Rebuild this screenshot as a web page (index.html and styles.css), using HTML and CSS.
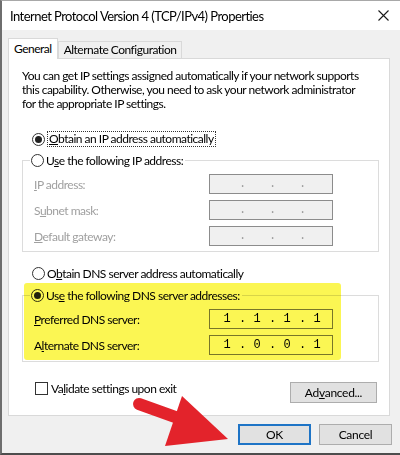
FILE: index.html
```html
<!DOCTYPE html>
<html lang="en">
<head>
  <meta charset="UTF-8">
  <title>Internet Protocol Version 4 (TCP/IPv4) Properties</title>
  <link rel="stylesheet" href="styles.css">
</head>
<body>

  <div class="window">
    <div class="titlebar">
      <span class="title">Internet Protocol Version 4 (TCP/IPv4) Properties</span>
      <svg class="close" width="11" height="11" viewBox="0 0 11 11">
        <path d="M0.5 0.5 L10.5 10.5 M10.5 0.5 L0.5 10.5" stroke="#1a1a1a" stroke-width="1.1" fill="none"/>
      </svg>
    </div>

    <div class="body">
      <div class="tabs">
        <div class="tab active">General</div>
        <div class="tab">Alternate Configuration</div>
      </div>

      <div class="panel">
        <p class="intro">You can get IP settings assigned automatically if your network supports<br>this capability. Otherwise, you need to ask your network administrator<br>for the appropriate IP settings.</p>

        <div class="radio-row first">
          <span class="radio checked"></span>
          <span class="focus"><u>O</u>btain an IP address automatically</span>
        </div>

        <fieldset class="group disabled">
          <legend><span class="radio"></span><span>U<u>s</u>e the following IP address:</span></legend>
          <div class="field-row">
            <span class="label"><u>I</u>P address:</span>
            <span class="ipbox"><span class="oct"></span><span class="dot">.</span><span class="oct"></span><span class="dot">.</span><span class="oct"></span><span class="dot">.</span><span class="oct"></span></span>
          </div>
          <div class="field-row">
            <span class="label">S<u>u</u>bnet mask:</span>
            <span class="ipbox"><span class="oct"></span><span class="dot">.</span><span class="oct"></span><span class="dot">.</span><span class="oct"></span><span class="dot">.</span><span class="oct"></span></span>
          </div>
          <div class="field-row">
            <span class="label"><u>D</u>efault gateway:</span>
            <span class="ipbox"><span class="oct"></span><span class="dot">.</span><span class="oct"></span><span class="dot">.</span><span class="oct"></span><span class="dot">.</span><span class="oct"></span></span>
          </div>
        </fieldset>

        <div class="radio-row dns-auto">
          <span class="radio"></span>
          <span>O<u>b</u>tain DNS server address automatically</span>
        </div>

        <fieldset class="group dns">
          <legend><span class="radio checked"></span><span>Us<u>e</u> the following DNS server addresses:</span></legend>
          <div class="field-row">
            <span class="label"><u>P</u>referred DNS server:</span>
            <span class="ipbox"><span class="oct">1</span><span class="dot">.</span><span class="oct">1</span><span class="dot">.</span><span class="oct">1</span><span class="dot">.</span><span class="oct">1</span></span>
          </div>
          <div class="field-row">
            <span class="label">A<u>l</u>ternate DNS server:</span>
            <span class="ipbox"><span class="oct">1</span><span class="dot">.</span><span class="oct">0</span><span class="dot">.</span><span class="oct">0</span><span class="dot">.</span><span class="oct">1</span></span>
          </div>
        </fieldset>

        <div class="bottom-row">
          <div class="check-row">
            <span class="checkbox"></span>
            <span>Va<u>l</u>idate settings upon exit</span>
          </div>
          <button class="btn advanced">Ad<u>v</u>anced...</button>
        </div>
      </div>

      <div class="footer">
        <button class="btn default">OK</button>
        <button class="btn">Cancel</button>
      </div>
    </div>

    <div class="highlight"></div>

    <svg class="arrow" width="400" height="455" viewBox="0 0 400 455">
      <line x1="139" y1="404" x2="178" y2="418" stroke="#e3232b" stroke-width="12" stroke-linecap="round"/>
      <polygon points="182,396 165,446 228,439" fill="#e3232b"/>
    </svg>
  </div>

</body>
</html>
```

FILE: styles.css
```css
body {
  margin: 0;
  font-family: "Lato", "Liberation Sans", sans-serif;
  font-size: 12px;
  letter-spacing: -0.5px;
  color: #000;
}

u {
  text-decoration: underline;
  text-underline-offset: 1px;
}

.window {
  position: relative;
  width: 400px;
  height: 455px;
  box-sizing: border-box;
  background: #f0f0f0;
  border-top: 1px solid #a8a8a8;
  border-left: 2px solid #6e6e6e;
  border-bottom: 2px solid #4d4d4d;
  overflow: hidden;
}

.titlebar {
  height: 29px;
  background: #fff;
  display: flex;
  align-items: center;
  justify-content: space-between;
  padding: 0 11px 0 8px;
}

.title {
  font-size: 13px;
  letter-spacing: -0.55px;
  white-space: nowrap;
}

.body {
  padding: 8px 10px 0 6px;
}

.tabs {
  display: flex;
  align-items: flex-end;
  height: 20px;
}

.tab {
  box-sizing: border-box;
  height: 17px;
  padding: 0 5px;
  line-height: 15px;
  border: 1px solid #d9d9d9;
  border-bottom: none;
  background: #f0f0f0;
  white-space: nowrap;
}

.tab.active {
  position: relative;
  z-index: 1;
  height: 21px;
  margin-bottom: -1px;
  padding: 0 5px;
  line-height: 19px;
  background: #fff;
}

.panel {
  box-sizing: border-box;
  height: 358px;
  background: #fff;
  border: 1px solid #d9d9d9;
}

.intro {
  margin: 0;
  padding: 10px 0 0 13px;
  line-height: 14px;
  white-space: nowrap;
}

.radio-row {
  display: flex;
  align-items: center;
  height: 16px;
  padding-left: 23px;
  white-space: nowrap;
}

.radio-row.first {
  margin-top: 20px;
}

.radio-row.dns-auto {
  margin-top: 13px;
}

.radio {
  box-sizing: border-box;
  width: 13px;
  height: 13px;
  margin-right: 2px;
  border: 1px solid #333;
  border-radius: 50%;
  display: flex;
  align-items: center;
  justify-content: center;
  flex-shrink: 0;
}

.radio.checked::after {
  content: "";
  width: 7px;
  height: 7px;
  border-radius: 50%;
  background: #222;
}

.focus {
  border: 1px dotted #333;
  padding: 0 1px;
  line-height: 14px;
}

.group {
  margin: 5px 10px 0 13px;
  padding: 6px 0 5px 11px;
  border: 1px solid #dcdcdc;
  min-width: 0;
}

.group.dns {
  margin-top: 6px;
  padding-bottom: 6px;
}

.group legend {
  display: flex;
  align-items: center;
  height: 16px;
  margin-left: -4px;
  padding: 0 2px 0 1px;
  white-space: nowrap;
}

.field-row {
  display: grid;
  grid-template-columns: 175px 124px;
  align-items: center;
  height: 20px;
  margin-bottom: 6px;
}

.field-row:last-child {
  margin-bottom: 0;
}

.label {
  white-space: nowrap;
}

.ipbox {
  box-sizing: border-box;
  height: 20px;
  display: flex;
  align-items: center;
  padding-left: 5px;
  border: 1px solid #7a7a7a;
  background: #fff;
  font-family: "Liberation Mono", monospace;
  font-size: 12px;
  letter-spacing: 0;
}

.oct {
  width: 24px;
  text-align: center;
}

.dot {
  width: 6px;
  text-align: center;
}

.disabled .label {
  color: #a0a0a0;
}

.disabled .ipbox {
  border-color: #8c8c8c;
  background: #f0f0f0;
  color: #a0a0a0;
}

.bottom-row {
  display: flex;
  justify-content: space-between;
  align-items: flex-start;
  margin-top: 18px;
  padding: 0 12px 0 26px;
}

.check-row {
  display: flex;
  align-items: center;
  height: 16px;
}

.checkbox {
  box-sizing: border-box;
  width: 13px;
  height: 13px;
  margin-right: 3px;
  border: 1px solid #333;
  background: #fff;
}

.btn {
  box-sizing: border-box;
  width: 73px;
  height: 21px;
  padding: 0;
  font-family: "Lato", "Liberation Sans", sans-serif;
  font-size: 12px;
  letter-spacing: -0.3px;
  color: #000;
  background: #e1e1e1;
  border: 1px solid #adadad;
}

.btn.advanced {
  width: 87px;
  margin-top: 2px;
}

.btn.default {
  border: 2px solid #1e74c6;
}

.footer {
  display: flex;
  justify-content: flex-end;
  gap: 8px;
  padding-top: 8px;
  margin-right: -2px;
}

.highlight {
  position: absolute;
  left: 22px;
  top: 282px;
  width: 317px;
  height: 77px;
  border-radius: 3px;
  background: #fbf653;
  mix-blend-mode: multiply;
  pointer-events: none;
}

.arrow {
  position: absolute;
  left: -2px;
  top: -1px;
  pointer-events: none;
}
```
